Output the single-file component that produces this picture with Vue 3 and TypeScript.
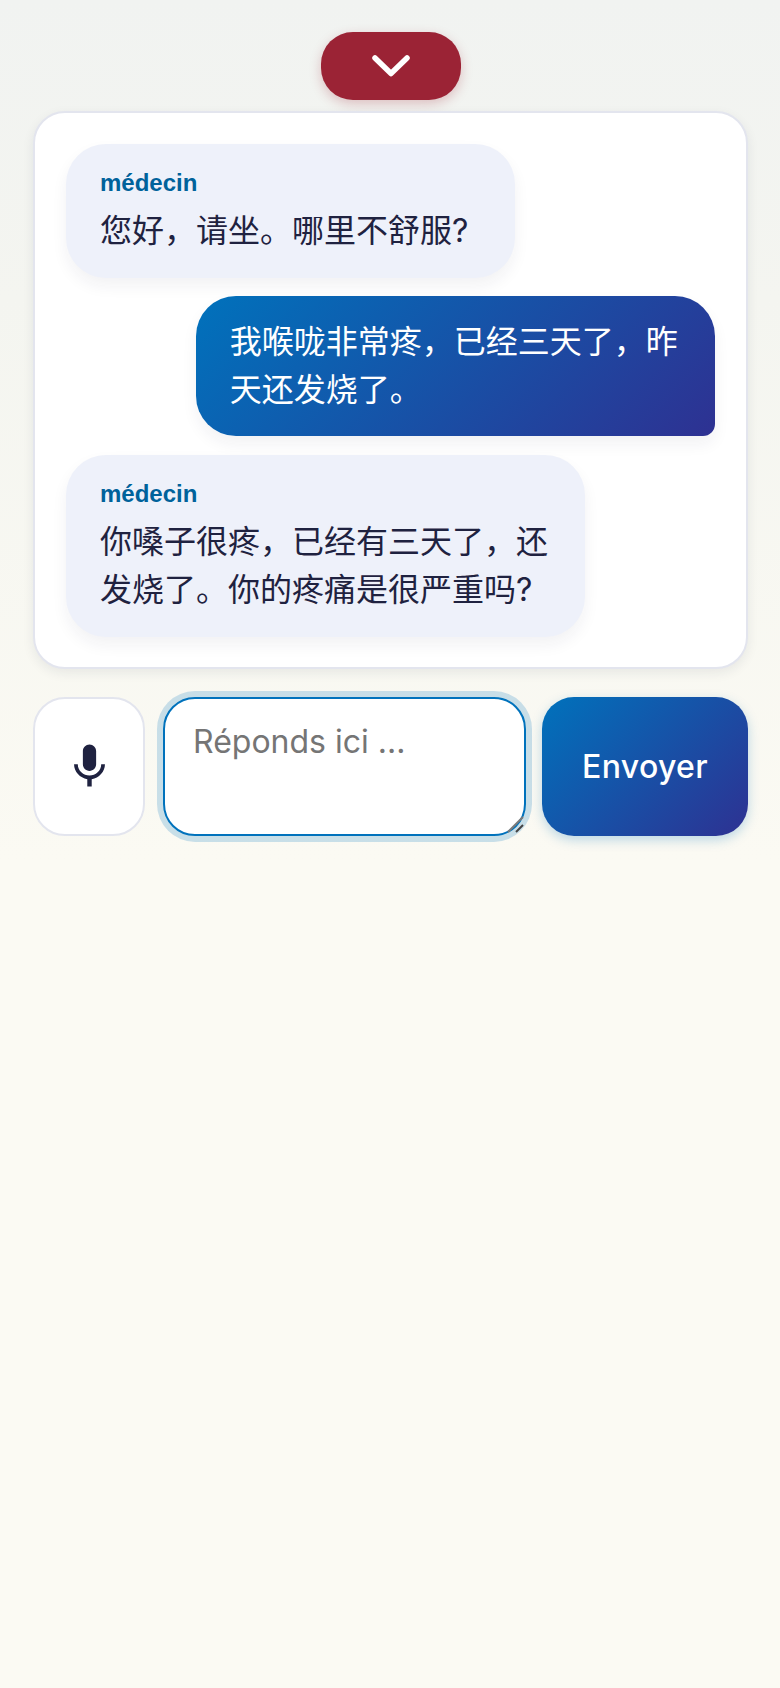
<template>
  <div class="page">
    <button class="collapse" type="button" aria-label="Réduire">
      <svg width="38" height="22" viewBox="0 0 38 22" fill="none">
        <path d="M3 3 L19 18.5 L35 3" stroke="#fff" stroke-width="5.5" stroke-linecap="round" stroke-linejoin="round" />
      </svg>
    </button>

    <section class="chat">
      <div
        v-for="(msg, i) in messages"
        :key="i"
        class="bubble"
        :class="msg.sender ? 'bubble--doctor' : 'bubble--me'"
      >
        <div v-if="msg.sender" class="bubble__sender">{{ msg.sender }}</div>
        <div class="bubble__text">{{ msg.text }}</div>
      </div>
    </section>

    <div class="composer">
      <button class="mic" type="button" aria-label="Micro">
        <svg width="53" height="53" viewBox="0 0 24 24" fill="#1f2240">
          <path d="M12 14c1.66 0 3-1.34 3-3V5c0-1.66-1.34-3-3-3S9 3.34 9 5v6c0 1.66 1.34 3 3 3zm5.3-3c0 3-2.54 5.1-5.3 5.1S6.7 14 6.7 11H5c0 3.41 2.72 6.23 6 6.72V21h2v-3.28c3.28-.48 6-3.3 6-6.72h-1.7z" />
        </svg>
      </button>
      <div class="answer-wrap">
        <textarea class="answer" placeholder="Réponds ici ..."></textarea>
        <svg class="grip" width="20" height="20" viewBox="0 0 20 20" fill="none">
          <path d="M3 18 L18 3" stroke="#7a7a7a" stroke-width="2" />
          <path d="M11 18 L18 11" stroke="#444" stroke-width="2" />
        </svg>
      </div>
      <button class="send" type="button">Envoyer</button>
    </div>
  </div>
</template>

<script setup lang="ts">
  interface Message {
    sender?: string
    text: string
  }

  const messages: Message[] = [
    { sender: "médecin", text: "您好，请坐。哪里不舒服?" },
    { text: "我喉咙非常疼，已经三天了，昨天还发烧了。" },
    { sender: "médecin", text: "你嗓子很疼，已经有三天了，还发烧了。你的疼痛是很严重吗?" },
  ]
</script>

<style>
  html,
  body {
    background: #fbfaf3;
  }
</style>

<style scoped>
  .page {
    box-sizing: border-box;
    min-height: 1688px;
    padding: 32px 32px 0 33px;
    display: flex;
    flex-direction: column;
    align-items: center;
    background: linear-gradient(180deg, #f1f3f1 0, #f4f5f0 300px, #fbfaf3 860px);
    font-family: Inter, "Noto Sans CJK SC", sans-serif;
  }

  .collapse {
    width: 140px;
    height: 68px;
    flex: none;
    display: flex;
    align-items: center;
    justify-content: center;
    padding: 0;
    border: none;
    border-radius: 32px;
    background: #9b2335;
    box-shadow: 0 4px 12px rgba(155, 35, 53, 0.25);
  }

  .chat {
    box-sizing: border-box;
    width: 100%;
    margin-top: 11px;
    padding: 31px 31px 30px;
    display: flex;
    flex-direction: column;
    gap: 18px;
    background: #fff;
    border: 2px solid #e3e5ee;
    border-radius: 32px;
    box-shadow: 0 4px 12px rgba(31, 34, 64, 0.08);
  }

  .bubble {
    box-sizing: border-box;
    max-width: 80%;
    font-size: 32px;
    line-height: 48px;
    border-radius: 40px;
    box-shadow: 0 8px 16px rgba(31, 34, 64, 0.06);
  }

  .bubble--doctor {
    align-self: flex-start;
    min-width: 449px;
    padding: 22px 34px 23px;
    background: #eef1fa;
    color: #1f2240;
  }

  .bubble--me {
    align-self: flex-end;
    margin-bottom: 1px;
    padding: 22px 34px;
    color: #fff;
    background: linear-gradient(135deg, #0072bc 0%, #2e3192 100%);
    border-bottom-right-radius: 12px;
  }

  .bubble__sender {
    font-family: "Liberation Sans", sans-serif;
    font-size: 24px;
    font-weight: 700;
    line-height: 34px;
    margin-bottom: 7px;
    color: #00629b;
  }

  .composer {
    width: 100%;
    margin-top: 28px;
    display: flex;
    gap: 16px;
    height: 139px;
  }

  .mic {
    box-sizing: border-box;
    width: 112px;
    margin-right: 2px;
    flex: none;
    display: flex;
    align-items: center;
    justify-content: center;
    padding: 0;
    background: #fff;
    border: 2px solid #e3e5ee;
    border-radius: 32px;
  }

  .answer-wrap {
    position: relative;
    flex: 1;
    min-width: 0;
    display: flex;
  }

  .answer {
    box-sizing: border-box;
    width: 100%;
    height: 100%;
    padding: 24px 28px;
    font-family: inherit;
    font-size: 32px;
    line-height: 38px;
    color: #1f2240;
    background: #fff;
    border: 2px solid #0072bc;
    border-radius: 32px;
    outline: none;
    resize: none;
    box-shadow: 0 0 0 6px rgba(0, 114, 188, 0.2);
  }

  .answer::placeholder {
    color: #757575;
    opacity: 1;
  }

  .grip {
    position: absolute;
    right: 1px;
    bottom: 2px;
  }

  .send {
    box-sizing: border-box;
    width: 206px;
    flex: none;
    padding: 0;
    font-family: inherit;
    font-size: 32px;
    font-weight: 500;
    letter-spacing: 0.35px;
    color: #fff;
    border: none;
    border-radius: 32px;
    background: linear-gradient(135deg, #0072bc 0%, #2e3192 100%);
    box-shadow: 0 4px 12px rgba(0, 114, 188, 0.25);
  }
</style>
